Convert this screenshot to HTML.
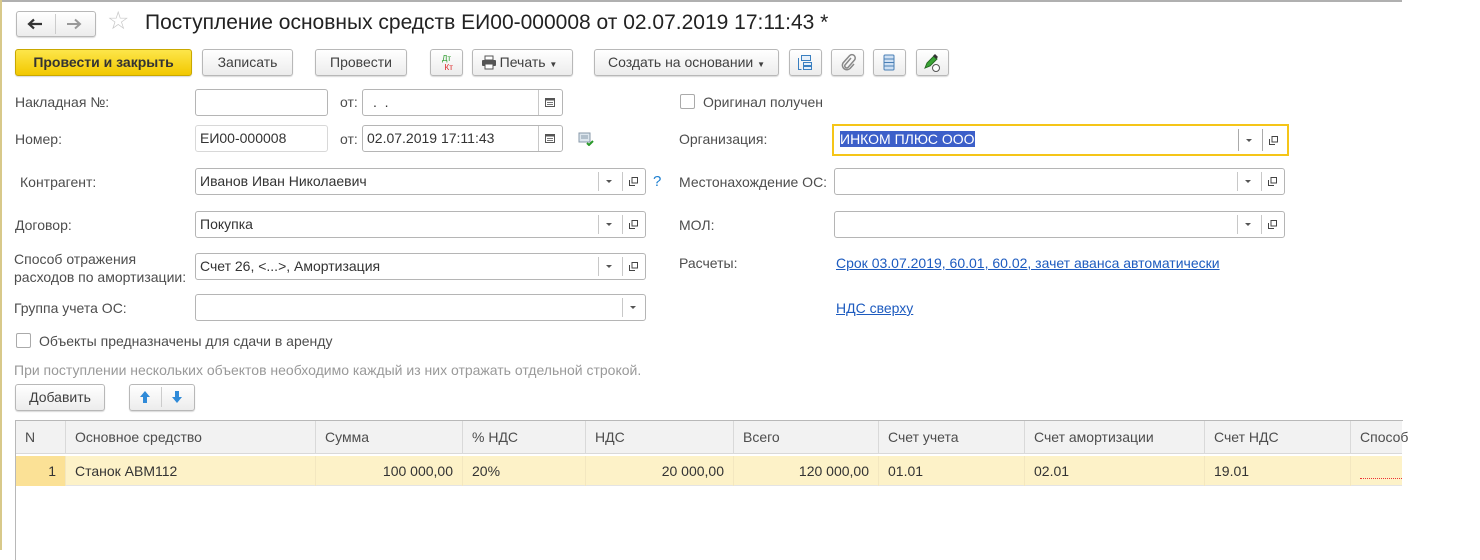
<!DOCTYPE html>
<html><head><meta charset="utf-8"><style>
*{box-sizing:border-box;margin:0;padding:0}
body{width:1480px;height:550px;background:#fff;position:relative;overflow:hidden;font-family:"Liberation Sans",Arial,sans-serif;font-size:14px;color:#404040}
.a{position:absolute;white-space:nowrap}
.btn{position:absolute;height:27px;border:1px solid #b8b8b8;border-radius:3px;background:linear-gradient(#fff,#ececec);box-shadow:0 1px 1px rgba(0,0,0,.15);text-align:center;line-height:25px;color:#404040;font-size:14px}
.inp{position:absolute;height:27px;border:1px solid #b5b5b5;border-radius:3px;background:#fff;line-height:25px;padding-left:4px;color:#333}
.sep{position:absolute;top:3px;bottom:3px;width:1px;background:#c8c8c8}
.dd{position:absolute;top:11px;width:0;height:0;border-left:3px solid transparent;border-right:3px solid transparent;border-top:3px solid #555}
.cp{position:absolute;top:8px;width:9px;height:9px}
.lbl{position:absolute;white-space:nowrap;color:#4d4d4d}
.chk{position:absolute;width:15px;height:15px;border:1px solid #aaa;border-radius:2px;background:#fff}
a{color:#1d5bbf;text-decoration:underline}
.th{position:absolute;top:0;height:32px;line-height:32px;border-right:1px solid #d9d9d9;padding-left:9px;color:#4d4d4d}
.td{position:absolute;top:0;height:30px;line-height:30px;border-right:1px solid #f3e7c0;padding:0 9px;color:#333}
</style></head><body>
<div class="a" style="left:0;top:0;width:1402px;height:2px;background:#b0b0b0"></div>
<div class="a" style="left:0;top:0;width:2px;height:550px;background:#d8c98a"></div>

<!-- nav -->
<div class="btn" style="left:16px;top:11px;width:80px;height:26px"></div>
<div class="a" style="left:55px;top:14px;width:1px;height:20px;background:#ccc"></div>
<svg class="a" style="left:27px;top:18px" width="16" height="12"><path d="M15 6H3M7 1.5L2 6l5 4.5" fill="none" stroke="#333" stroke-width="2.2"/></svg>
<svg class="a" style="left:66px;top:18px" width="16" height="12"><path d="M1 6h12M9 1.5L14 6l-5 4.5" fill="none" stroke="#999" stroke-width="2"/></svg>
<div class="a" style="left:107px;top:6px;font-size:25px;color:#c8c8c8">&#9734;</div>
<div class="a" style="left:145px;top:11px;font-size:21px;color:#222">Поступление основных средств ЕИ00-000008 от 02.07.2019 17:11:43 *</div>

<!-- toolbar -->
<div class="btn" style="left:15px;top:49px;width:177px;background:linear-gradient(#fde64a,#f2c800);border-color:#c9a800;color:#333;font-weight:bold">Провести и закрыть</div>
<div class="btn" style="left:202px;top:49px;width:91px">Записать</div>
<div class="btn" style="left:315px;top:49px;width:92px">Провести</div>
<div class="btn" style="left:430px;top:49px;width:33px;font-size:8px;line-height:9px;padding-top:4px"><span style="color:#2a9a2a">Дт</span><br><span style="color:#d22">&nbsp;&nbsp;Кт</span></div>
<div class="btn" style="left:472px;top:49px;width:101px;padding-left:12px">Печать <span style="font-size:8px">&#9660;</span></div>
<svg class="a" style="left:481px;top:55px" width="16" height="15"><rect x="4" y="1" width="8" height="4" fill="#fff" stroke="#555"/><rect x="1" y="5" width="14" height="6" rx="1" fill="#555"/><rect x="4" y="9" width="8" height="5" fill="#fff" stroke="#555"/></svg>
<div class="btn" style="left:594px;top:49px;width:185px">Создать на основании <span style="font-size:8px">&#9660;</span></div>
<div class="btn" style="left:789px;top:49px;width:33px"></div>
<svg class="a" style="left:797px;top:54px" width="17" height="17"><rect x="4.5" y="1.5" width="9" height="5" fill="#e6f0fa" stroke="#3a7fc0"/><rect x="6.5" y="8.5" width="8" height="3" fill="#e6f0fa" stroke="#3a7fc0"/><rect x="6.5" y="12.5" width="8" height="3" fill="#e6f0fa" stroke="#3a7fc0"/><path d="M1.5 4v11.5h3" fill="none" stroke="#3a7fc0"/></svg>
<div class="btn" style="left:831px;top:49px;width:33px"></div>
<svg class="a" style="left:840px;top:53px" width="16" height="18"><path d="M11 5l-6 7a2 2 0 0 0 3 2.5l6.5-7.5a3.3 3.3 0 0 0-5-4.3L3 10a4.5 4.5 0 0 0 7 5.5l4-4.5" fill="none" stroke="#888" stroke-width="1.5"/></svg>
<div class="btn" style="left:873px;top:49px;width:33px"></div>
<svg class="a" style="left:883px;top:54px" width="12" height="17"><rect x="1" y="1" width="10" height="15" rx="1" fill="#cfe0f3" stroke="#4a7fb5"/><path d="M1 5h10M1 8.5h10M1 12h10" stroke="#4a7fb5"/></svg>
<div class="btn" style="left:916px;top:49px;width:33px"></div>
<svg class="a" style="left:922px;top:53px" width="20" height="20"><path d="M3 15l2-5 7-7 3 3-7 7z" fill="#3aa535" stroke="#256b22"/><path d="M11 3l2-2 3 3-2 2" fill="#333"/><circle cx="14" cy="15" r="3.5" fill="#fff" stroke="#555"/></svg>

<!-- row 1 -->
<div class="lbl" style="left:15px;top:94px">Накладная №:</div>
<div class="inp" style="left:195px;top:89px;width:133px"></div>
<div class="lbl" style="left:340px;top:94px">от:</div>
<div class="inp" style="left:362px;top:89px;width:201px;padding-left:10px">.&nbsp; .<div class="sep" style="left:175px;top:0;bottom:0"></div></div>
<svg class="a" style="left:545px;top:97px" width="10" height="10"><rect x="0.5" y="1.5" width="9" height="8" fill="#fff" stroke="#555"/><rect x="0.5" y="1.5" width="9" height="2" fill="#555"/><path d="M2 5.5h6M2 7.5h6" stroke="#777"/></svg>

<div class="lbl" style="left:15px;top:131px">Номер:</div>
<div class="inp" style="left:195px;top:125px;width:133px;border-color:#d8d8d8">ЕИ00-000008</div>
<div class="lbl" style="left:340px;top:131px">от:</div>
<div class="inp" style="left:362px;top:125px;width:201px">02.07.2019 17:11:43<div class="sep" style="left:175px;top:0;bottom:0"></div></div>
<svg class="a" style="left:545px;top:133px" width="10" height="10"><rect x="0.5" y="1.5" width="9" height="8" fill="#fff" stroke="#555"/><rect x="0.5" y="1.5" width="9" height="2" fill="#555"/><path d="M2 5.5h6M2 7.5h6" stroke="#777"/></svg>
<svg class="a" style="left:578px;top:132px" width="16" height="14"><rect x="1" y="1" width="11" height="9" fill="#dde6ee" stroke="#8899aa"/><path d="M3 4h7M3 6h7" stroke="#8899aa"/><path d="M9 11l2 2 4-4" fill="none" stroke="#2a9a2a" stroke-width="2"/></svg>

<div class="chk" style="left:680px;top:94px"></div>
<div class="lbl" style="left:703px;top:94px">Оригинал получен</div>

<div class="lbl" style="left:679px;top:131px">Организация:</div>
<div class="inp" style="left:832px;top:124px;width:457px;height:32px;border:2px solid #f5c518;border-radius:0;line-height:27px;padding-left:6px"><span style="background:#3c5fc9;color:#fff">ИНКОМ ПЛЮС ООО</span>
<div class="sep" style="left:404px;background:#aaa"></div><div class="dd" style="left:412px;top:13px"></div><div class="sep" style="left:428px;background:#aaa"></div>
<svg class="cp" style="left:435px;top:10px" viewBox="0 0 9 9"><path d="M3 0.5h5.5v5.5h-5.5z M0.5 3v5.5h5.5" fill="none" stroke="#444"/></svg></div>

<div class="lbl" style="left:20px;top:174px">Контрагент:</div>
<div class="inp" style="left:195px;top:168px;width:451px">Иванов Иван Николаевич<div class="sep" style="left:402px"></div><div class="dd" style="left:410px"></div><div class="sep" style="left:426px"></div><svg class="cp" style="left:433px" viewBox="0 0 9 9"><path d="M3 0.5h5.5v5.5h-5.5z M0.5 3v5.5h5.5" fill="none" stroke="#444"/></svg></div>
<div class="a" style="left:653px;top:173px;color:#1d7fd0;font-size:15px">?</div>
<div class="lbl" style="left:679px;top:174px">Местонахождение ОС:</div>
<div class="inp" style="left:834px;top:168px;width:451px"><div class="sep" style="left:402px"></div><div class="dd" style="left:410px"></div><div class="sep" style="left:426px"></div><svg class="cp" style="left:433px" viewBox="0 0 9 9"><path d="M3 0.5h5.5v5.5h-5.5z M0.5 3v5.5h5.5" fill="none" stroke="#444"/></svg></div>

<div class="lbl" style="left:15px;top:217px">Договор:</div>
<div class="inp" style="left:195px;top:211px;width:451px">Покупка<div class="sep" style="left:402px"></div><div class="dd" style="left:410px"></div><div class="sep" style="left:426px"></div><svg class="cp" style="left:433px" viewBox="0 0 9 9"><path d="M3 0.5h5.5v5.5h-5.5z M0.5 3v5.5h5.5" fill="none" stroke="#444"/></svg></div>
<div class="lbl" style="left:679px;top:217px">МОЛ:</div>
<div class="inp" style="left:834px;top:211px;width:451px"><div class="sep" style="left:402px"></div><div class="dd" style="left:410px"></div><div class="sep" style="left:426px"></div><svg class="cp" style="left:433px" viewBox="0 0 9 9"><path d="M3 0.5h5.5v5.5h-5.5z M0.5 3v5.5h5.5" fill="none" stroke="#444"/></svg></div>

<div class="lbl" style="left:14px;top:250px;line-height:18px">Способ отражения<br>расходов по амортизации:</div>
<div class="inp" style="left:195px;top:253px;width:451px">Счет 26, &lt;...&gt;, Амортизация<div class="sep" style="left:402px"></div><div class="dd" style="left:410px"></div><div class="sep" style="left:426px"></div><svg class="cp" style="left:433px" viewBox="0 0 9 9"><path d="M3 0.5h5.5v5.5h-5.5z M0.5 3v5.5h5.5" fill="none" stroke="#444"/></svg></div>
<div class="lbl" style="left:679px;top:255px">Расчеты:</div>
<div class="a" style="left:836px;top:255px"><a>Срок 03.07.2019, 60.01, 60.02, зачет аванса автоматически</a></div>

<div class="lbl" style="left:14px;top:300px">Группа учета ОС:</div>
<div class="inp" style="left:195px;top:294px;width:451px"><div class="sep" style="left:426px"></div><div class="dd" style="left:434px"></div></div>
<div class="a" style="left:836px;top:300px"><a>НДС сверху</a></div>

<div class="chk" style="left:16px;top:333px"></div>
<div class="lbl" style="left:39px;top:333px">Объекты предназначены для сдачи в аренду</div>
<div class="lbl" style="left:14px;top:362px;color:#999">При поступлении нескольких объектов необходимо каждый из них отражать отдельной строкой.</div>

<div class="btn" style="left:15px;top:384px;width:90px">Добавить</div>
<div class="btn" style="left:129px;top:384px;width:66px"></div>
<div class="a" style="left:161px;top:387px;width:1px;height:20px;background:#ccc"></div>
<svg class="a" style="left:138px;top:390px" width="14" height="14"><path d="M7 1l5 6h-3v6h-4v-6h-3z" fill="#2f8ad8"/></svg>
<svg class="a" style="left:170px;top:390px" width="14" height="14"><path d="M7 13l5-6h-3v-6h-4v6h-3z" fill="#2f8ad8"/></svg>

<!-- table -->
<div class="a" style="left:15px;top:420px;width:1388px;height:140px;border:1px solid #b8b8b8;border-right:none;border-bottom:none"></div>
<div class="a" style="left:16px;top:421px;width:1386px;height:33px;background:#f2f2f2;border-bottom:1px solid #d9d9d9">
<div class="th" style="left:0;width:50px">N</div>
<div class="th" style="left:50px;width:250px">Основное средство</div>
<div class="th" style="left:300px;width:147px">Сумма</div>
<div class="th" style="left:447px;width:123px">% НДС</div>
<div class="th" style="left:570px;width:148px">НДС</div>
<div class="th" style="left:718px;width:145px">Всего</div>
<div class="th" style="left:863px;width:146px">Счет учета</div>
<div class="th" style="left:1009px;width:180px">Счет амортизации</div>
<div class="th" style="left:1189px;width:146px">Счет НДС</div>
<div class="th" style="left:1335px;width:60px;border:none">Способ</div>
</div>
<div class="a" style="left:16px;top:456px;width:1386px;height:30px;background:#fdf2c8;border-bottom:1px solid #e4e4e4">
<div class="td" style="left:0;width:50px;background:#fbe196;text-align:right">1</div>
<div class="td" style="left:50px;width:250px">Станок АВМ112</div>
<div class="td" style="left:300px;width:147px;text-align:right">100 000,00</div>
<div class="td" style="left:447px;width:123px">20%</div>
<div class="td" style="left:570px;width:148px;text-align:right">20 000,00</div>
<div class="td" style="left:718px;width:145px;text-align:right">120 000,00</div>
<div class="td" style="left:863px;width:146px">01.01</div>
<div class="td" style="left:1009px;width:180px">02.01</div>
<div class="td" style="left:1189px;width:146px">19.01</div>
<div class="a" style="left:1344px;top:22px;width:42px;border-top:1px dotted #e33"></div>
</div>
</body></html>
